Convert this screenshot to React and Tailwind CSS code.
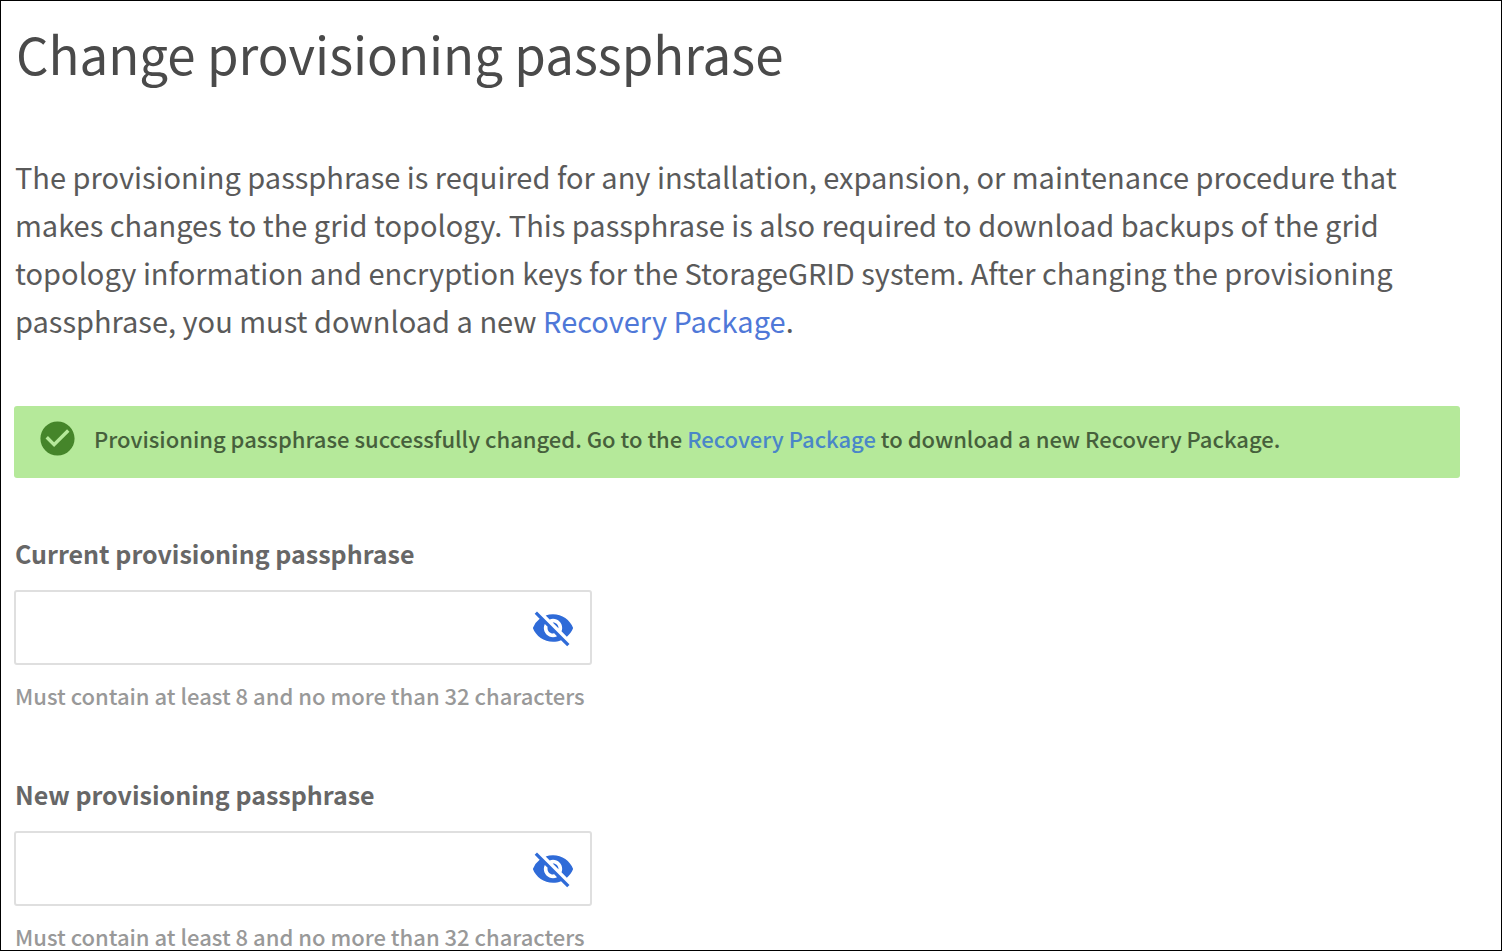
import { useState } from "react";
import { MdCheckCircle, MdVisibility, MdVisibilityOff } from "react-icons/md";

function PassphraseField({ id, label }) {
  const [visible, setVisible] = useState(false);
  const Icon = visible ? MdVisibility : MdVisibilityOff;
  return (
    <div className="flex flex-col">
      <label htmlFor={id} className="px-px text-[25px] leading-8 font-bold text-[#676767]">
        {label}
      </label>
      <div className="mt-[21px] flex h-[75px] w-full max-w-[578px] items-center rounded-[3px] border-2 border-[#dfdfdf] bg-white pr-[15px]">
        <input
          id={id}
          type={visible ? "text" : "password"}
          aria-describedby={id + "-hint"}
          className="h-full min-w-0 flex-1 bg-transparent px-4 text-2xl outline-none"
        />
        <button type="button" aria-label="Toggle visibility" onClick={() => setVisible(!visible)} className="text-[#2f6bd8]">
          <Icon className="size-11" />
        </button>
      </div>
      <p id={id + "-hint"} className="mt-3.5 px-px text-[22px] leading-8 font-medium text-[#999999]">
        Must contain at least 8 and no more than 32 characters
      </p>
    </div>
  );
}

export default function App() {
  return (
    <main className="h-screen overflow-hidden border border-black bg-white pt-4 pr-[41px] pl-[13px] font-['Noto_Sans_CJK_SC',sans-serif] text-[#5a5a5a]">
      <h1 className="px-0.5 text-[51px] leading-[72px] text-[#4a4a4a]">Change provisioning passphrase</h1>
      <p className="mt-[63px] px-px text-[29px] leading-[48px]">
        The provisioning passphrase is required for any installation, expansion, or maintenance procedure that makes
        changes to the grid topology. This passphrase is also required to download backups of the grid topology
        information and encryption keys for the StorageGRID system. After changing the provisioning passphrase, you must
        download a new <a href="#recovery" className="text-[#4f78d8]">Recovery Package</a>.
      </p>
      <div role="status" className="mt-[62px] flex min-h-[72px] items-center gap-4 rounded-[3px] bg-[#b5e99a] px-[23px] pb-2">
        <MdCheckCircle className="size-[41px] shrink-0 text-[#45852a]" />
        <p className="text-[22px] leading-8 font-medium text-[#46603c]">
          Provisioning passphrase successfully changed. Go to the{" "}
          <a href="#recovery" className="text-[#4a86c8]">Recovery Package</a> to download a new Recovery Package.
        </p>
      </div>
      <form className="mt-[59px] flex flex-col gap-[67px]">
        <PassphraseField id="current-passphrase" label="Current provisioning passphrase" />
        <PassphraseField id="new-passphrase" label="New provisioning passphrase" />
      </form>
    </main>
  );
}
